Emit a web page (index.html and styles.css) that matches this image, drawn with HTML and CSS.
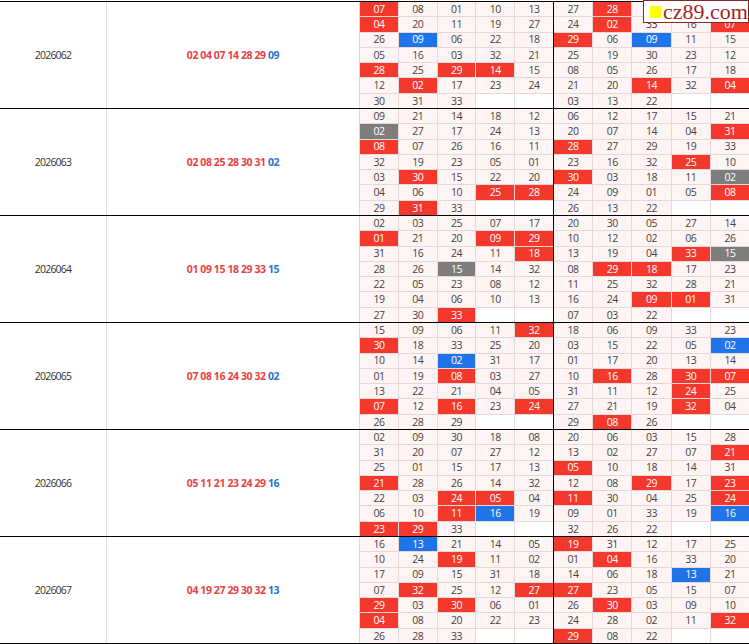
FILE: index.html
```html
<!DOCTYPE html>
<html lang="zh">
<head>
<meta charset="utf-8">
<title>cz89.com</title>
<link rel="stylesheet" href="styles.css">
</head>
<body>
<div class="table">
  <div class="group">
    <div class="issue">2026062</div>
    <div class="draw"><p><b class="red">02 04 07 14 28 29</b> <b class="blue">09</b></p></div>
    <div class="grid">
      <div class="blk left">
        <span class="r">07</span><span>08</span><span>01</span><span>10</span><span>13</span>
        <span class="r">04</span><span>20</span><span>11</span><span>19</span><span>27</span>
        <span>26</span><span class="b">09</span><span>06</span><span>22</span><span>18</span>
        <span>05</span><span>16</span><span>03</span><span>32</span><span>21</span>
        <span class="r">28</span><span>25</span><span class="r">29</span><span class="r">14</span><span>15</span>
        <span>12</span><span class="r">02</span><span>17</span><span>23</span><span>24</span>
        <span>30</span><span>31</span><span>33</span><span class="e"></span><span class="e"></span>
      </div>
      <div class="blk right">
        <span>27</span><span class="r">28</span><span>01</span><span>10</span><span>31</span>
        <span>24</span><span class="r">02</span><span>33</span><span>16</span><span class="r">07</span>
        <span class="r">29</span><span>06</span><span class="b">09</span><span>11</span><span>15</span>
        <span>25</span><span>19</span><span>30</span><span>23</span><span>12</span>
        <span>08</span><span>05</span><span>26</span><span>17</span><span>18</span>
        <span>21</span><span>20</span><span class="r">14</span><span>32</span><span class="r">04</span>
        <span>03</span><span>13</span><span>22</span><span class="e"></span><span class="e"></span>
      </div>
    </div>
  </div>

  <div class="group">
    <div class="issue">2026063</div>
    <div class="draw"><p><b class="red">02 08 25 28 30 31</b> <b class="blue">02</b></p></div>
    <div class="grid">
      <div class="blk left">
        <span>09</span><span>21</span><span>14</span><span>18</span><span>12</span>
        <span class="g">02</span><span>27</span><span>17</span><span>24</span><span>13</span>
        <span class="r">08</span><span>07</span><span>26</span><span>16</span><span>11</span>
        <span>32</span><span>19</span><span>23</span><span>05</span><span>01</span>
        <span>03</span><span class="r">30</span><span>15</span><span>22</span><span>20</span>
        <span>04</span><span>06</span><span>10</span><span class="r">25</span><span class="r">28</span>
        <span>29</span><span class="r">31</span><span>33</span><span class="e"></span><span class="e"></span>
      </div>
      <div class="blk right">
        <span>06</span><span>12</span><span>17</span><span>15</span><span>21</span>
        <span>20</span><span>07</span><span>14</span><span>04</span><span class="r">31</span>
        <span class="r">28</span><span>27</span><span>29</span><span>19</span><span>33</span>
        <span>23</span><span>16</span><span>32</span><span class="r">25</span><span>10</span>
        <span class="r">30</span><span>03</span><span>18</span><span>11</span><span class="g">02</span>
        <span>24</span><span>09</span><span>01</span><span>05</span><span class="r">08</span>
        <span>26</span><span>13</span><span>22</span><span class="e"></span><span class="e"></span>
      </div>
    </div>
  </div>

  <div class="group">
    <div class="issue">2026064</div>
    <div class="draw"><p><b class="red">01 09 15 18 29 33</b> <b class="blue">15</b></p></div>
    <div class="grid">
      <div class="blk left">
        <span>02</span><span>03</span><span>25</span><span>07</span><span>17</span>
        <span class="r">01</span><span>21</span><span>20</span><span class="r">09</span><span class="r">29</span>
        <span>31</span><span>16</span><span>24</span><span>11</span><span class="r">18</span>
        <span>28</span><span>26</span><span class="g">15</span><span>14</span><span>32</span>
        <span>22</span><span>05</span><span>23</span><span>08</span><span>12</span>
        <span>19</span><span>04</span><span>06</span><span>10</span><span>13</span>
        <span>27</span><span>30</span><span class="r">33</span><span class="e"></span><span class="e"></span>
      </div>
      <div class="blk right">
        <span>20</span><span>30</span><span>05</span><span>27</span><span>14</span>
        <span>10</span><span>12</span><span>02</span><span>06</span><span>26</span>
        <span>13</span><span>19</span><span>04</span><span class="r">33</span><span class="g">15</span>
        <span>08</span><span class="r">29</span><span class="r">18</span><span>17</span><span>23</span>
        <span>11</span><span>25</span><span>32</span><span>28</span><span>21</span>
        <span>16</span><span>24</span><span class="r">09</span><span class="r">01</span><span>31</span>
        <span>07</span><span>03</span><span>22</span><span class="e"></span><span class="e"></span>
      </div>
    </div>
  </div>

  <div class="group">
    <div class="issue">2026065</div>
    <div class="draw"><p><b class="red">07 08 16 24 30 32</b> <b class="blue">02</b></p></div>
    <div class="grid">
      <div class="blk left">
        <span>15</span><span>09</span><span>06</span><span>11</span><span class="r">32</span>
        <span class="r">30</span><span>18</span><span>33</span><span>25</span><span>20</span>
        <span>10</span><span>14</span><span class="b">02</span><span>31</span><span>17</span>
        <span>01</span><span>19</span><span class="r">08</span><span>03</span><span>27</span>
        <span>13</span><span>22</span><span>21</span><span>04</span><span>05</span>
        <span class="r">07</span><span>12</span><span class="r">16</span><span>23</span><span class="r">24</span>
        <span>26</span><span>28</span><span>29</span><span class="e"></span><span class="e"></span>
      </div>
      <div class="blk right">
        <span>18</span><span>06</span><span>09</span><span>33</span><span>23</span>
        <span>03</span><span>15</span><span>22</span><span>05</span><span class="b">02</span>
        <span>01</span><span>17</span><span>20</span><span>13</span><span>14</span>
        <span>10</span><span class="r">16</span><span>28</span><span class="r">30</span><span class="r">07</span>
        <span>31</span><span>11</span><span>12</span><span class="r">24</span><span>25</span>
        <span>27</span><span>21</span><span>19</span><span class="r">32</span><span>04</span>
        <span>29</span><span class="r">08</span><span>26</span><span class="e"></span><span class="e"></span>
      </div>
    </div>
  </div>

  <div class="group">
    <div class="issue">2026066</div>
    <div class="draw"><p><b class="red">05 11 21 23 24 29</b> <b class="blue">16</b></p></div>
    <div class="grid">
      <div class="blk left">
        <span>02</span><span>09</span><span>30</span><span>18</span><span>08</span>
        <span>31</span><span>20</span><span>07</span><span>27</span><span>12</span>
        <span>25</span><span>01</span><span>15</span><span>17</span><span>13</span>
        <span class="r">21</span><span>28</span><span>26</span><span>14</span><span>32</span>
        <span>22</span><span>03</span><span class="r">24</span><span class="r">05</span><span>04</span>
        <span>06</span><span>10</span><span class="r">11</span><span class="b">16</span><span>19</span>
        <span class="r">23</span><span class="r">29</span><span>33</span><span class="e"></span><span class="e"></span>
      </div>
      <div class="blk right">
        <span>20</span><span>06</span><span>03</span><span>15</span><span>28</span>
        <span>13</span><span>02</span><span>27</span><span>07</span><span class="r">21</span>
        <span class="r">05</span><span>10</span><span>18</span><span>14</span><span>31</span>
        <span>12</span><span>08</span><span class="r">29</span><span>17</span><span class="r">23</span>
        <span class="r">11</span><span>30</span><span>04</span><span>25</span><span class="r">24</span>
        <span>09</span><span>01</span><span>33</span><span>19</span><span class="b">16</span>
        <span>32</span><span>26</span><span>22</span><span class="e"></span><span class="e"></span>
      </div>
    </div>
  </div>

  <div class="group">
    <div class="issue">2026067</div>
    <div class="draw"><p><b class="red">04 19 27 29 30 32</b> <b class="blue">13</b></p></div>
    <div class="grid">
      <div class="blk left">
        <span>16</span><span class="b">13</span><span>21</span><span>14</span><span>05</span>
        <span>10</span><span>24</span><span class="r">19</span><span>11</span><span>02</span>
        <span>17</span><span>09</span><span>15</span><span>31</span><span>18</span>
        <span>07</span><span class="r">32</span><span>25</span><span>12</span><span class="r">27</span>
        <span class="r">29</span><span>03</span><span class="r">30</span><span>06</span><span>01</span>
        <span class="r">04</span><span>08</span><span>20</span><span>22</span><span>23</span>
        <span>26</span><span>28</span><span>33</span><span class="e"></span><span class="e"></span>
      </div>
      <div class="blk right">
        <span class="r">19</span><span>31</span><span>12</span><span>17</span><span>25</span>
        <span>01</span><span class="r">04</span><span>16</span><span>33</span><span>20</span>
        <span>14</span><span>06</span><span>18</span><span class="b">13</span><span>21</span>
        <span class="r">27</span><span>23</span><span>05</span><span>15</span><span>07</span>
        <span>26</span><span class="r">30</span><span>03</span><span>09</span><span>10</span>
        <span>24</span><span>28</span><span>02</span><span>11</span><span class="r">32</span>
        <span class="r">29</span><span>08</span><span>22</span><span class="e"></span><span class="e"></span>
      </div>
    </div>
  </div>
</div>

<div class="logo"><span class="sq"></span><span class="logo-text">cz89.com</span></div>
</body>
</html>
```

FILE: styles.css
```css
html, body {
  margin: 0;
  padding: 0;
  background: #fff;
}

body {
  font-family: "Open Sans", "Noto Sans", sans-serif;
  color: #333;
  overflow: hidden;
}

.table {
  padding-top: 1px;
  border-bottom: 1px solid #000;
  width: 749px;
}

.group {
  display: flex;
  height: 107px;
  box-sizing: border-box;
  border-top: 1px solid #000;
}

.issue {
  width: 107px;
  box-sizing: border-box;
  border-right: 1px solid #dcdcdc;
  display: flex;
  align-items: center;
  justify-content: center;
  font-size: 10.5px;
  letter-spacing: -0.8px;
  color: #333;
}

.draw {
  width: 253px;
  box-sizing: border-box;
  border-right: 1px solid #e2d6d6;
  display: flex;
  align-items: center;
  justify-content: center;
  font-size: 10.5px;
  font-weight: 700;
  letter-spacing: -0.4px;
}

.draw p {
  margin: 0;
  white-space: nowrap;
}

.draw b { font-weight: 700; }
.draw .red { color: #e94242; }
.draw .blue { color: #2a74d0; }

.grid {
  flex: 1;
  display: flex;
}

.blk {
  display: grid;
  grid-template-columns: repeat(5, 1fr);
  grid-template-rows: repeat(7, 1fr);
  gap: 1px;
  background: #e6d8d8;
}

.blk.left {
  width: 194px;
  box-sizing: border-box;
  border-right: 1px solid #000;
}

.blk.right {
  flex: 1;
}

.blk span {
  background: #fdf4f3;
  display: flex;
  align-items: center;
  justify-content: center;
  font-size: 10.5px;
  letter-spacing: -0.5px;
  color: #444;
  line-height: 1;
}

.blk span.r { background: #f5382c; color: #fff; }
.blk span.b { background: #1f74ea; color: #fff; }
.blk span.g { background: #7d7d7d; color: #fff; }
.blk span.e { background: #fff; }

.logo {
  position: absolute;
  top: 0;
  right: 0;
  width: 106px;
  height: 23px;
  box-sizing: border-box;
  border: 1px solid #8b2626;
  background: #fff;
  display: flex;
  align-items: center;
  padding-left: 6px;
  gap: 2px;
}

.logo .sq {
  width: 11px;
  height: 12px;
  background: #ffff00;
  flex: none;
}

.logo .logo-text {
  font-family: "Liberation Serif", serif;
  font-size: 22px;
  line-height: 19px;
  color: #a82222;
  letter-spacing: 0;
}
```
